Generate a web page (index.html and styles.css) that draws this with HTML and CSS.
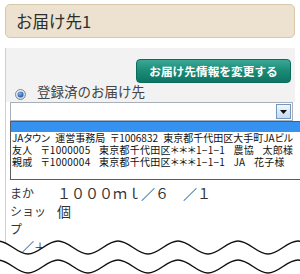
FILE: index.html
```html
<!DOCTYPE html>
<html lang="ja">
<head>
<meta charset="utf-8">
<link rel="stylesheet" href="styles.css">
</head>
<body>
<div class="page">
  <div class="title">お届け先1</div>
  <div class="panel">
    <div class="panel-head">
      <div class="btn-row"><button class="btn">お届け先情報を変更する</button></div>
      <label class="radio-row">
        <svg class="radio" width="11" height="11" viewBox="0 0 11 11">
          <defs>
            <radialGradient id="rg" cx="40%" cy="35%" r="70%">
              <stop offset="0" stop-color="#ffffff"/>
              <stop offset="1" stop-color="#c9d2dc"/>
            </radialGradient>
            <radialGradient id="dot" cx="40%" cy="35%" r="70%">
              <stop offset="0" stop-color="#7fb6ef"/>
              <stop offset="1" stop-color="#1d4f97"/>
            </radialGradient>
          </defs>
          <circle cx="5.5" cy="5.5" r="5" fill="url(#rg)" stroke="#7d8896" stroke-width="1"/>
          <circle cx="5.5" cy="5.5" r="3" fill="url(#dot)"/>
        </svg>
        <span class="radio-label">登録済のお届け先</span>
      </label>
    </div>
    <div class="select-area">
      <div class="select">
        <span class="arrow">
          <svg width="7" height="4" viewBox="0 0 7 4"><path d="M0 0 H7 L3.5 4 Z" fill="#111"/></svg>
        </span>
      </div>
      <ul class="list">
        <li class="hl"></li>
        <li class="opt-a">JAタウン 運営事務局 〒1006832 東京都千代田区大手町JAビル</li>
        <li class="opt-b">友人 〒1000005 東京都千代田区＊＊＊1−1−1 農協 太郎様</li>
        <li class="opt-b">親戚 〒1000004 東京都千代田区＊＊＊1−1−1 JA 花子様</li>
        <li class="blank"></li>
      </ul>
    </div>
    <div class="items">
      <div class="c1">まか<br>ショッ<br>プ<br>　／＋</div>
      <div class="c2">１０００ｍｌ／６　／１<br>個</div>
    </div>
  </div>
  <svg class="tear" width="300" height="38" viewBox="0 0 300 38">
    <path d="M -2 5 C 9 5 17 18 28 18 C 39 18 47 5 58 5 C 69 5 77 18 88 18 C 99 18 107 5 118 5 C 129 5 137 18 148 18 C 159 18 167 5 178 5 C 189 5 197 18 208 18 C 219 18 227 5 238 5 C 249 5 257 18 268 18 C 279 18 287 5 298 5 C 309 5 317 18 328 18 L 328 40 L -2 40 Z" fill="#fff"/>
    <path d="M -2 5 C 9 5 17 18 28 18 C 39 18 47 5 58 5 C 69 5 77 18 88 18 C 99 18 107 5 118 5 C 129 5 137 18 148 18 C 159 18 167 5 178 5 C 189 5 197 18 208 18 C 219 18 227 5 238 5 C 249 5 257 18 268 18 C 279 18 287 5 298 5 C 309 5 317 18 328 18" fill="none" stroke="#111" stroke-width="1.5"/>
    <path d="M -2 24 C 9 24 17 37 28 37 C 39 37 47 24 58 24 C 69 24 77 37 88 37 C 99 37 107 24 118 24 C 129 24 137 37 148 37 C 159 37 167 24 178 24 C 189 24 197 37 208 37 C 219 37 227 24 238 24 C 249 24 257 37 268 37 C 279 37 287 24 298 24 C 309 24 317 37 328 37" fill="none" stroke="#111" stroke-width="1.5"/>
  </svg>
</div>
</body>
</html>
```
FILE: styles.css
```css
html, body {
  margin: 0;
  padding: 0;
  overflow: hidden;
  background: #fff;
}
body {
  width: 300px;
  height: 274px;
  font-family: "Noto Sans CJK JP", "Noto Sans", sans-serif;
  color: #333;
}
.page {
  position: relative;
  height: 274px;
  box-sizing: border-box;
  padding: 4px 5px 0 5px;
}
.title {
  height: 34px;
  box-sizing: border-box;
  border: 1px solid #d5c8ab;
  border-radius: 5px;
  background: #ece2cf;
  font-size: 16.5px;
  line-height: 32px;
  padding-left: 10px;
  color: #2e2e2e;
}
.panel {
  margin-top: 10px;
  border-left: 1px solid #cfcfcf;
}
.panel-head {
  background: #f2f2f2;
  padding: 11px 4px 2px 0;
}
.btn-row {
  display: flex;
  justify-content: flex-end;
}
.btn {
  width: 155px;
  height: 24px;
  box-sizing: border-box;
  border: 1px solid #0c6b5a;
  border-radius: 4px;
  background: linear-gradient(#3aa894, #1a8a76 50%, #0e7563);
  color: #fff;
  font-family: "Noto Sans CJK JP", "Noto Sans", sans-serif;
  font-weight: 700;
  font-size: 11.7px;
  line-height: 20px;
  padding: 0;
}
.radio-row {
  display: flex;
  align-items: flex-start;
  height: 17px;
  padding-left: 9px;
  gap: 11px;
}
.radio {
  margin-top: 6px;
  flex: none;
}
.radio-label {
  font-size: 13.5px;
  line-height: 17px;
  color: #444;
}
.select-area {
  position: relative;
  padding-left: 4px;
}
.select {
  position: relative;
  width: 283px;
  height: 19px;
  box-sizing: border-box;
  border: 1px solid #a8afb8;
  background: #fff;
}
.arrow {
  position: absolute;
  right: 1px;
  top: 1px;
  width: 15px;
  height: 15px;
  box-sizing: border-box;
  border: 1px solid #7497c0;
  background: linear-gradient(#f1f7fd, #c3dbf2);
  display: flex;
  align-items: center;
  justify-content: center;
}
.list {
  position: absolute;
  left: 4px;
  top: 19px;
  width: 320px;
  margin: 0;
  padding: 0;
  list-style: none;
  background: #fff;
  border: 1px solid #5c5c5c;
  font-size: 10px;
  color: #111;
  z-index: 2;
}
.list li {
  height: 12px;
  line-height: 12px;
  padding-left: 1px;
  white-space: nowrap;
  font-feature-settings: "palt";
}
.list li.opt-a {
  word-spacing: 3px;
}
.list li.opt-b {
  word-spacing: 6px;
  letter-spacing: 0.25px;
}
.list li.hl {
  height: 10px;
  background: #3592f0;
}
.list li.blank {
  height: 11px;
}
.items {
  display: grid;
  grid-template-columns: 47px 1fr;
  padding: 63px 0 0 4px;
  line-height: 18px;
  color: #333;
}
.c1 {
  font-size: 12px;
}
.c2 {
  font-size: 14px;
}
.tear {
  position: absolute;
  left: 0;
  top: 236px;
  z-index: 3;
}
```
